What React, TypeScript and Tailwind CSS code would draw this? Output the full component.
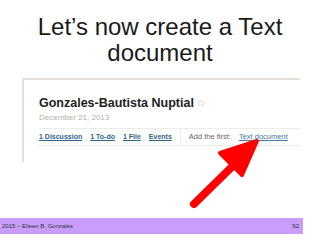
import { Star } from 'lucide-react'

export default function App() {
  return (
    <div className="relative flex h-[240px] w-[320px] flex-col overflow-hidden bg-white">
      <h1 className="pt-[14px] text-center font-['Liberation_Sans',sans-serif] text-[24px] font-normal leading-[26px] text-[#1a1a1a]">
        Let’s now create a Text
        <br />
        document
      </h1>

      <div className="ml-[22px] mr-[20px] mt-[12px] h-[84px] border-l-2 border-t-2 border-[#e4e0dc] pl-[15px] pt-[16px] font-['Liberation_Sans',sans-serif]">
        <div className="flex items-center gap-[3px]">
          <span className="whitespace-nowrap text-[12.5px] font-bold leading-[14px] text-[#1e1e1e]">
            Gonzales-Bautista Nuptial
          </span>
          <Star size={8} className="text-[#cfcfcf]" strokeWidth={2} />
        </div>
        <div className="mt-[3px] text-[8px] leading-[10px] text-[#b5b0aa]">December 21, 2013</div>
        <div className="mt-[5px] flex h-[18px] items-center whitespace-nowrap border-b border-t border-[#ecebea]">
          <a className="mr-[8px] text-[7px] font-bold text-[#2f6585] underline">1 Discussion</a>
          <a className="mr-[8px] text-[7px] font-bold text-[#2f6585] underline">1 To-do</a>
          <a className="mr-[8px] text-[7px] font-bold text-[#2f6585] underline">1 File</a>
          <a className="text-[7px] font-bold text-[#2f6585] underline">Events</a>
          <div className="mx-[8px] h-full w-px bg-[#ecebea]" />
          <span className="mr-[8px] text-[7.5px] text-[#666666]">Add the first:</span>
          <a className="text-[7.5px] text-[#46799a] underline">Text document</a>
        </div>
      </div>

      <svg className="absolute left-0 top-0" width="320" height="240" viewBox="0 0 320 240">
        <line x1="194" y1="204" x2="246" y2="153" stroke="#ff0000" strokeWidth="8" strokeLinecap="round" />
        <polygon
          points="257,141 220,153 242,175"
          fill="#ff0000"
          stroke="#ff0000"
          strokeWidth="4"
          strokeLinejoin="round"
        />
      </svg>

      <div className="mb-[6px] mt-auto flex h-[16px] w-[303px] items-center justify-between bg-[#c99dfc] pl-[2px] pr-[4px] font-['Liberation_Sans',sans-serif] text-[6px] text-[#333333]">
        <span>2015 – Eileen B. Gonzales</span>
        <span>92</span>
      </div>
    </div>
  )
}
